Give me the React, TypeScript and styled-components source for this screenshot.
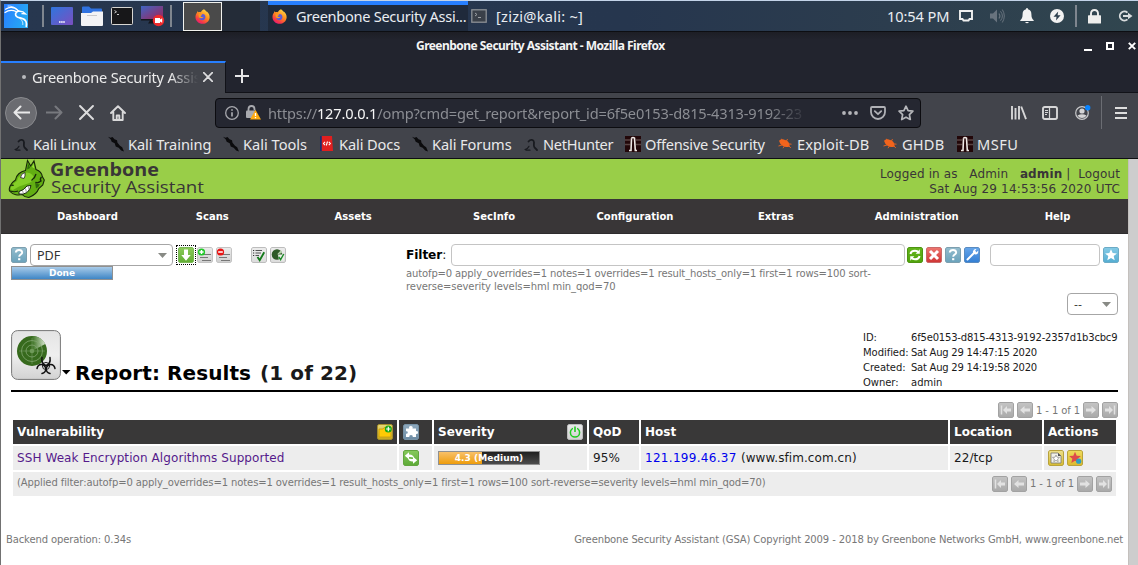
import React from 'react';
import styled, { createGlobalStyle } from 'styled-components';

const GlobalStyle = createGlobalStyle`
  * { box-sizing: border-box; }
  body { margin: 0; background: #fff; overflow: hidden; }
  svg { display: block; flex: none; }
`;

const Desktop = styled.div`
  width: 1138px;
  height: 565px;
  display: flex;
  flex-direction: column;
  border-top: 1px solid #c3d3e8;
  border-left: 1px solid #717171;
  font-family: 'Noto Sans', sans-serif;
  overflow: hidden;
  white-space: nowrap;
`;

/* ---------- desktop panel ---------- */
const Panel = styled.div`
  flex: none;
  height: 31px;
  display: flex;
  align-items: center;
  background: linear-gradient(90deg, #27374f 0%, #26364e 55%, #2c3d4e 78%, #31464f 100%);
  border-bottom: 1px solid #0d0e12;
  color: #e9edf2;
  font-size: 14.6px;
`;
const Slot = styled.div<{ $w: number }>`
  flex: none;
  width: ${p => p.$w}px;
  display: flex;
  align-items: center;
`;
const PanelLine = styled.div`
  width: 2px;
  height: 22px;
  background: #7f868f;
`;
const Launcher = styled.div`
  flex: none;
  width: 39px;
  height: 29px;
  background: #4a4a4a;
  border: 1px solid #f2f2ee;
  display: flex;
  align-items: center;
  justify-content: center;
`;
const DarkSlot = styled.div`
  flex: none;
  width: 38px;
  height: 30px;
  background: #242c38;
  margin-right: 8px;
`;
const Task = styled.div<{ $w: number; $active?: boolean; $gap: number }>`
  flex: none;
  width: ${p => p.$w}px;
  height: 30px;
  padding: 0 0 0 ${p => (p.$active ? 4 : 3)}px;
  display: flex;
  align-items: center;
  gap: ${p => p.$gap}px;
  background: ${p => (p.$active ? 'linear-gradient(#277fff 0 4px, #1f2a3b 4px)' : 'none')};
`;
const PanelText = styled.span<{ $ls?: number }>`
  letter-spacing: ${p => p.$ls ?? 0}px;
  margin-top: -1px;
`;
const Spring = styled.div`flex: 1;`;

/* ---------- browser chrome ---------- */
const TitleBar = styled.div`
  flex: none;
  height: 29px;
  padding: 3px 0 0;
  display: flex;
  align-items: flex-start;
  background: linear-gradient(#1d1e25, #22242e 8px);
  color: #f4f4f4;
`;
const WindowTitle = styled.div`
  padding: 1px 0 0 415px;
  width: 1083px;
  font-size: 12px;
  line-height: 20px;
  font-weight: 700;
  letter-spacing: -0.54px;
`;
const WindowButtons = styled.div`
  display: flex;
  gap: 14px;
  padding-top: 6px;
`;
const TabStrip = styled.div`
  flex: none;
  height: 32px;
  display: flex;
  background: linear-gradient(#22242e 31px, #111218 31px);
`;
const Tab = styled.div`
  width: 225px;
  height: 32px;
  padding: 0 12px 2px 20px;
  display: flex;
  align-items: center;
  background: #42444b;
  border-top: 2px solid #277fff;
  border-right: 1px solid #111218;
  color: #ececec;
  font-size: 14.6px;
`;
const NewTab = styled.div`
  padding: 8px 0 0 9px;
`;
const Dot = styled.i`
  width: 4px;
  height: 4px;
  margin: 0 6px 0 1px;
  border-radius: 50%;
  background: #b9babd;
`;
const TabLabel = styled.span`
  width: 166px;
  overflow: hidden;
  letter-spacing: -0.2px;
  mask-image: linear-gradient(90deg, #000 138px, transparent 166px);
`;
const NavBar = styled.div`
  flex: none;
  height: 39px;
  display: flex;
  align-items: center;
  background: #42444b;
  padding-left: 4px;
`;
const BackButton = styled.div`
  width: 32px;
  height: 32px;
  border-radius: 50%;
  border: 1px solid #898a8e;
  background: #6b6c71;
  display: flex;
  align-items: center;
  justify-content: center;
`;
const UrlBar = styled.div`
  width: 706px;
  height: 30px;
  border: 1px solid #0c0c10;
  border-radius: 4px;
  background: #252731;
  display: flex;
  align-items: center;
  padding-left: 9px;
`;
const Url = styled.div`
  width: 541px;
  margin-left: 7px;
  overflow: hidden;
  color: #8b8d93;
  font-size: 14.6px;
  letter-spacing: -0.17px;
  mask-image: linear-gradient(90deg, #000 500px, transparent 541px);
  b { font-weight: 400; color: #f6f6f6; }
`;
const NavDivider = styled.div`
  width: 1px;
  height: 33px;
  background: #6b6d73;
`;
const Bookmarks = styled.div`
  flex: none;
  height: 27px;
  padding: 0 0 3px 12px;
  display: flex;
  align-items: center;
  background: #42444b;
  border-bottom: 1px solid #0e0f12;
  color: #e9e9ea;
  font-size: 14.6px;
`;
const Bookmark = styled.div<{ $w: number; $ls: number }>`
  flex: none;
  width: ${p => p.$w}px;
  letter-spacing: ${p => p.$ls}px;
  display: flex;
  align-items: center;
  gap: 4px;
`;

/* ---------- web page ---------- */
const Viewport = styled.div`
  flex: 1;
  display: flex;
  min-height: 0;
  font-family: 'DejaVu Sans', sans-serif;
`;
const Page = styled.div`
  width: 1127px;
  display: flex;
  flex-direction: column;
  background: #fff;
  color: #1a1a1a;
`;
const ScrollTrack = styled.div`
  flex: 1;
  background: #cdcdcd;
  border-left: 1px solid #c4c0bd;
`;
const Brand = styled.div`
  flex: none;
  height: 40px;
  padding: 0 8px 0 6px;
  display: flex;
  justify-content: space-between;
  background: #99ce48;
  color: #393637;
`;
const BrandName = styled.div`
  display: flex;
  gap: 5px;
`;
const Account = styled.div`
  padding-top: 8px;
  font-size: 12px;
  line-height: 15px;
  letter-spacing: 0.11px;
  text-align: right;
  white-space: pre;
`;
const AccountDate = styled.div`letter-spacing: 0.18px;`;
const Menu = styled.div`
  flex: none;
  height: 35px;
  display: flex;
  align-items: center;
  background: #393637;
  border-bottom: 1px solid #2e2c2d;
  color: #fff;
  font-size: 10px;
  font-weight: 700;
`;
const MenuItem = styled.div`
  flex: none;
  width: 12.5%;
  text-align: center;
  &:first-child { padding-left: 32px; }
`;
const Toolbar = styled.div`
  flex: none;
  height: 83px;
  padding: 10px 10px 0;
  display: flex;
  justify-content: space-between;
`;
const ReportTools = styled.div`width: 395px;`;
const FilterTools = styled.div`
  width: 712px;
  display: flex;
  flex-direction: column;
`;
const Row = styled.div`
  display: flex;
  align-items: center;
  gap: 3px;
`;
const FilterBar = styled.div`
  width: 499px;
  margin-right: -1px;
  display: flex;
  align-items: center;
`;
const SelectLine = styled.div`
  display: flex;
  justify-content: flex-end;
`;
const Select = styled.div<{ $w: number; $small?: boolean }>`
  flex: none;
  width: ${p => p.$w}px;
  height: 22px;
  padding: 0 ${p => (p.$small ? 6 : 5)}px 0 6px;
  display: flex;
  align-items: center;
  justify-content: space-between;
  border: 1px solid #a6a6a6;
  border-radius: 4px;
  font-family: ${p => (p.$small ? "'DejaVu Sans'" : "'Noto Sans'")}, sans-serif;
  font-size: ${p => (p.$small ? 11 : 12.6)}px;
  color: #333;
`;
const Field = styled.div<{ $w: number }>`
  flex: none;
  width: ${p => p.$w}px;
  height: 22px;
  border: 1px solid #c4c4c4;
  border-radius: 4px;
`;
const Gap = styled.div<{ $w: number }>`
  flex: none;
  width: ${p => p.$w}px;
`;
const FocusRing = styled.div`
  flex: none;
  width: 18px;
  height: 18px;
  margin: 0 -1px 0 1px;
  outline: 1px dotted #000;
  display: flex;
  align-items: center;
  justify-content: center;
`;
const Progress = styled.div<{ $fill: string }>`
  width: 102px;
  height: 14px;
  border: 1px solid #909090;
  background: ${p => p.$fill};
  color: #fff;
  font-size: 9px;
  line-height: 12px;
  font-weight: 700;
  text-align: center;
`;
const FilterLabel = styled.div`
  width: 45px;
  font-size: 12.2px;
  b { color: #000; letter-spacing: -0.1px; }
`;
const FilterNote = styled.div`
  padding-top: 1px;
  width: 480px;
  color: #777;
  font-size: 10px;
  line-height: 13px;
  letter-spacing: -0.13px;
  white-space: pre;
  span { letter-spacing: -0.08px; }
`;
const ReportHead = styled.div`
  flex: none;
  height: 75px;
  margin: 0 10px;
  padding-top: 12px;
  display: flex;
  align-items: flex-start;
  border-bottom: 2px solid #000;
`;
const ReportBadge = styled.div`
  width: 50px;
  height: 50px;
  margin-top: 1px;
`;
const Caret = styled.div`
  width: 14px;
  padding: 41px 0 0 1px;
`;
const Heading = styled.h1`
  width: 788px;
  margin: 31px 0 0;
  font-size: 20px;
  line-height: 27px;
  letter-spacing: 0.08px;
  color: #000;
  span { color: #1a1a1a; margin-left: 9px; }
`;
const Facts = styled.dl`
  margin: 0;
  padding-top: 1px;
  display: grid;
  grid-template-columns: 48px 206px;
  grid-auto-rows: 15px;
  font-size: 10px;
  line-height: 15px;
  dd, dt { margin: 0; }
  dt { letter-spacing: -0.05px; }
  dd { letter-spacing: -0.24px; }
  dd:first-of-type { letter-spacing: -0.19px; }
  dd:last-of-type { letter-spacing: 0; }
`;
const Pager = styled.div`
  display: flex;
  align-items: center;
  justify-content: flex-end;
  gap: 3px;
  color: #777;
  font-size: 10px;
`;
const PagerText = styled.span`
  width: 44px;
  letter-spacing: -0.1px;
  margin-top: -1px;
`;
const TopPager = styled(Pager)`
  flex: none;
  height: 28px;
  padding: 8px 10px 0 0;
  ${PagerText} { margin-top: 0; }
`;
const Table = styled.div`
  flex: none;
  margin: 0 12px;
  width: 1103px;
  display: grid;
  grid-template-columns: 384px 33px 153px 50px 307px 92px 72px;
  grid-auto-rows: 24px;
  gap: 2px;
  font-size: 12px;
`;
const Cell = styled.div<{ $head?: boolean }>`
  display: flex;
  align-items: center;
  padding: 0 4px;
  gap: 3px;
  background: ${p => (p.$head ? '#393838' : '#ededed')};
  color: ${p => (p.$head ? '#fff' : '#1a1a1a')};
  font-weight: ${p => (p.$head ? 700 : 400)};
  letter-spacing: ${p => (p.$head ? 0.04 : 0.08)}px;
`;
const HeadLabel = styled.span`flex: 1;`;
const VulnLink = styled.span`color: #551a8b;`;
const HostLink = styled.span`
  color: #0000ee;
  letter-spacing: 0.3px;
  margin-right: 1.2px;
`;
const FootCell = styled.div`
  grid-column: 1 / -1;
  padding: 0 4px;
  display: flex;
  align-items: center;
  justify-content: space-between;
  background: #ededed;
  color: #777;
  font-size: 10px;
`;
const AppliedFilter = styled.span`
  margin-top: -3px;
  letter-spacing: -0.106px;
`;
const Footer = styled.div`
  margin-top: auto;
  padding: 0 5px 18px;
  display: flex;
  justify-content: space-between;
  color: #777;
  font-size: 10px;
  line-height: 14px;
  letter-spacing: -0.125px;
`;

/* ---------- drawings ---------- */
const Firefox = () => (
  <svg width="15" height="15" viewBox="0 0 16 16">
    <defs>
      <linearGradient id="ffx" x1="0.8" y1="0" x2="0.2" y2="1">
        <stop offset="0" stopColor="#ffe14a" /><stop offset="0.45" stopColor="#ff8a1e" />
        <stop offset="0.8" stopColor="#f5354a" /><stop offset="1" stopColor="#e31587" />
      </linearGradient>
    </defs>
    <path d="M9.5 0.3c1.9 1 2.4 2.2 2.8 3.2 0-.5 0-1-.2-1.4C14.500 4 15.800 6.300 15.600 9c-.3 4-3.500 6.800-7.500 6.800C3.800 15.800.5 12.600.5 8.500c0-2 .7-3.500 1.600-4.500l.3-1.700 1.300 1.200c.8-.3 1.600-.3 2.300 0C7.300 1.700 8.300.800 9.500.3z" fill="url(#ffx)" />
    <circle cx="7.800" cy="8.600" r="3.300" fill="#5b5bd8" />
    <path d="M3.800 5.200l4 .3c-.2 1.200-1.500 1.300-1.900 2.200.3.900 1.900 1.200 3.200.6-.9 2-3.700 2-5 .4z" fill="#ff9b1c" />
  </svg>
);
const KaliLogo = () => (
  <svg width="24" height="24" viewBox="0 0 24 24">
    <defs><linearGradient id="kali" x1="0" x2="1" y2="0.4"><stop stopColor="#2a7dff" /><stop offset="1" stopColor="#25a8f5" /></linearGradient></defs>
    <rect width="24" height="24" fill="url(#kali)" />
    <g fill="none" stroke="#fff" strokeLinecap="round">
      <path d="M1.500 5.200C6 2.500 11 3.500 14.500 7M1 8.500c3.500-2.600 8-2.500 11.500-.8" strokeWidth="1.200" />
      <path d="M4 2c4.500 0 8 1.500 10.500 5" strokeWidth=".8" />
      <path d="M14.500 7c-3.500 1.200-4 4.500-1.200 6 3 1.300 7 .8 8.700 4.500.6 1.500.6 3 .3 4.800" strokeWidth="1.700" />
      <path d="M14.500 7l4.500.8 2.500 2.200-3.500-.3" strokeWidth="1.300" />
      <path d="M15.500 14c3 2.500 3.500 4.500 3.300 6.500" strokeWidth=".8" />
    </g>
  </svg>
);
const Gradients = () => (
  <defs>
    <linearGradient id="scr" x2="1" y2="1"><stop stopColor="#2f76dd" /><stop offset="1" stopColor="#7b4fc0" /></linearGradient>
    <linearGradient id="scr2" x2="1" y2="1"><stop stopColor="#3f65c4" /><stop offset="1" stopColor="#a02358" /></linearGradient>
  </defs>
);
const DesktopIcon = () => (
  <svg width="22" height="18"><Gradients /><rect width="22" height="18" rx="1" fill="url(#scr)" /><path d="M8 15h6" stroke="#fff" strokeWidth="1.700" strokeDasharray="1.600 .5" /></svg>
);
const FolderIcon = () => (
  <svg width="22" height="20"><path d="M1 7V1.500Q1 .5 2 .5h6l2 2h10q1 0 1 1V8z" fill="#2f72e0" /><path d="M0 7h10l2-1.500h10V19q0 1-1 1H1q-1 0-1-1z" fill="#f3f3f5" /><path d="M6 9.500h10" stroke="#c9c9cc" /></svg>
);
const TerminalIcon = () => (
  <svg width="22" height="18"><rect x=".5" y=".5" width="21" height="17" rx="1" fill="#171719" stroke="#d8d6d2" /><path d="M3.500 3.500l2 1.300-2 1.200M6 7.500h2" stroke="#ddd" fill="none" strokeWidth=".9" /></svg>
);
const RecorderIcon = () => (
  <svg width="24" height="22"><path d="M0 1h22v13H0z" fill="url(#scr2)" /><path d="M0 14h22v1.500H0zM9 15.500h5v3H7z" fill="#15161c" /><circle cx="17.500" cy="15.500" r="5.700" fill="#ee2a2c" /><path d="M14 13h5v1.500l2.200-1.200v4.500L19 16.500V18h-5z" fill="#fff" /></svg>
);
const SmallTerminal = () => (
  <svg width="16" height="14"><rect x=".8" y=".8" width="14.400" height="12.400" fill="#3a4049" stroke="#8c9096" strokeWidth="1.300" /><path d="M4 4l2 1.500L4 7M7 8.500h3" stroke="#9da1a6" fill="none" /></svg>
);
const DisplayGlyph = () => (
  <svg width="14" height="12"><path d="M1 1h12v8h-2.500l-1 1.500h-5L3.500 9H1z" fill="none" stroke="#f0f0f0" strokeWidth="1.900" /></svg>
);
const VolumeGlyph = () => (
  <svg width="16" height="14" fill="none" stroke="#68737e"><path d="M0 4.500h3L7 .5v13L3 9.500H0z" fill="#68737e" stroke="none" /><path d="M9 4.500q1.800 2.500 0 5" strokeWidth="1.200" /><path d="M10.500 2.300q3.800 4.700 0 9.400M12.300.5q4 6.500 0 13" /></svg>
);
const BellGlyph = () => (
  <svg width="14" height="16" fill="#f2f2f2"><path d="M7 0q1 0 1 1.200c2.500.6 3.400 2.300 3.400 5 0 3.300.8 4.600 2.300 6.100V13H.3v-.7c1.500-1.500 2.300-2.800 2.300-6.100 0-2.700.9-4.400 3.400-5Q6 0 7 0zM5 14h4q-2 2.500-4 0z" /></svg>
);
const PowerGlyph = () => (
  <svg width="14" height="14"><circle cx="7" cy="7" r="7" fill="#f2f2f2" /><path d="M8.200 2.500L3.500 7.800h3L6 11.500l4.600-5.200h-3z" fill="#2d3f4e" /></svg>
);
const LockGlyph = () => (
  <svg width="13" height="15"><path d="M3 7V4.500Q3 1 6.500 1T10 4.500V7" stroke="#eeeeec" strokeWidth="1.900" fill="none" /><rect y="6.300" width="13" height="8.300" rx=".6" fill="#eeeeec" /></svg>
);
const LogoutGlyph = () => (
  <svg width="15" height="12" fill="none" stroke="#d8dcdd" strokeWidth="1.900"><path d="M9.500 2.600A4.600 4.600 0 1 0 9.500 9.400M5 6h6" /><path d="M10 2.800l4.500 3.200L10 9.200z" fill="#d8dcdd" stroke="none" /></svg>
);
const MinGlyph = () => <svg width="8" height="10"><path d="M0 9h8" stroke="#fff" strokeWidth="2" /></svg>;
const MaxGlyph = () => <svg width="8" height="10"><path d="M1 2h6v6H1z" stroke="#fff" strokeWidth="2" fill="none" /></svg>;
const CloseGlyph = () => <svg width="8" height="10"><path d="M.8 1.800l6.400 6.400M7.200 1.800L.8 8.200" stroke="#fff" strokeWidth="1.900" /></svg>;
const CrossGlyph = ({ s = 10, w = 1.7 }: { s?: number; w?: number }) => (
  <svg width={s} height={s} viewBox="0 0 10 10"><path d="M.7.7l8.600 8.600M9.300.7L.7 9.300" stroke="#dcdcdd" strokeWidth={w} strokeLinecap="round" /></svg>
);
const PlusGlyph = () => <svg width="14" height="14"><path d="M7 0v14M0 7h14" stroke="#e6e6e7" strokeWidth="2" /></svg>;
const Arrow = ({ flip, color }: { flip?: boolean; color: string }) => (
  <svg width="17" height="15" viewBox="0 0 17 15"><path d={flip ? 'M0.500 7.500h15M9.500 1.500l6 6-6 6' : 'M16.500 7.500H1.500M7.500 1.500l-6 6 6 6'} stroke={color} strokeWidth="2" fill="none" strokeLinecap="round" strokeLinejoin="round" /></svg>
);
const HomeGlyph = () => (
  <svg width="16" height="16" fill="none" stroke="#d9d9da" strokeWidth="1.900" strokeLinecap="round" strokeLinejoin="round"><path d="M1 8l7-6.800L15 8M3.300 7v8h9.400V7M6.700 14.500v-4h2.600v4" /></svg>
);
const InfoGlyph = () => (
  <svg width="14" height="14" fill="none" stroke="#a7a8ad"><circle cx="7" cy="7" r="6.300" strokeWidth="1.300" /><path d="M7 6.200v4.300M7 3.300v1.500" strokeWidth="1.700" /></svg>
);
const InsecureGlyph = () => (
  <svg width="15" height="15"><path d="M2.500 6V4Q2.500 1 5.500 1T8.500 4v1.500" stroke="#a9aaaf" strokeWidth="1.800" fill="none" /><rect y="5.500" width="9" height="7.500" rx="1" fill="#a9aaaf" /><path d="M9.500 4.800L15 14.600H4z" fill="#ffab0f" /><path d="M9.500 8v3M9.500 12v1.300" stroke="#fff" strokeWidth="1.300" /></svg>
);
const DotsGlyph = () => <svg width="16" height="4" fill="#b4b5b9"><circle cx="2" cy="2" r="1.900" /><circle cx="8" cy="2" r="1.900" /><circle cx="14" cy="2" r="1.900" /></svg>;
const PocketGlyph = () => (
  <svg width="16" height="14" fill="none" stroke="#b0b1b6" strokeWidth="1.800" strokeLinejoin="round" strokeLinecap="round"><path d="M2 1h12q1 0 1 1v4a7 7 0 0 1-14 0V2q0-1 1-1zM4.800 5.200L8 8.200l3.200-3" /></svg>
);
const StarGlyph = () => (
  <svg width="16" height="16" fill="none" stroke="#b6b7bb" strokeWidth="1.700" strokeLinejoin="round"><path d="M8 1.200l2.100 4.400 4.800.6-3.500 3.400.9 4.900L8 12.200l-4.300 2.300.9-4.900L1.100 6.200l4.800-.6z" /></svg>
);
const LibraryGlyph = () => (
  <svg width="16" height="14" stroke="#d6d6d7" strokeWidth="1.900"><path d="M1 0v13.500M4.500 2v11.500M8 0v13.500M10.200.5L15 13.200" /></svg>
);
const SidebarGlyph = () => (
  <svg width="16" height="14" fill="none" stroke="#d6d6d7"><rect x="1" y="1" width="14" height="12" rx="1.700" strokeWidth="1.900" /><path d="M7.500 1v12" strokeWidth="1.200" /><path d="M3 4.500h3M3 6.500h3M3 8.500h2" strokeWidth="1" /></svg>
);
const ProfileGlyph = () => (
  <svg width="16" height="15"><circle cx="7" cy="8" r="6.300" fill="none" stroke="#c8c9cb" strokeWidth="1.200" /><circle cx="7" cy="6" r="2.600" fill="#d4d4d5" /><path d="M2.500 10.500Q7 8 11.500 10.500 10 13 7 13t-4.500-2.500z" fill="#d4d4d5" /><circle cx="12.700" cy="2.700" r="2.700" fill="#0a84ff" /></svg>
);
const MenuGlyph = () => <svg width="12" height="12"><path d="M0 1h12M0 6h12M0 11h12" stroke="#dedede" strokeWidth="1.900" /></svg>;

type Mark = 'dragon' | 'blade' | 'docs' | 'offsec' | 'bug';
const BookmarkIcon = ({ kind }: { kind: Mark }) => (
  <svg width="16" height="16">
    {kind === 'dragon' && <g fill="none" stroke="#191b20" strokeLinecap="round"><path d="M5.500 5.500C7.500 3 10.800 3.500 11 6.200c.1 1.800-.8 3.500.5 5.300l2.500 2.500" strokeWidth="1.800" /><path d="M2 13.500c2-.3 3.200-1.500 4-3.200M3 14.200h4" strokeWidth="1.200" /></g>}
    {kind === 'blade' && <path d="M0 .8l2.500 1L4.500 1l2 2.200 2.500 1 .5 2.500 2.500 3 2.200 1.500L16 15.500l-2.800-1-2.500-2.700-3-1.300-1-3.300-3-1.500L2.800 3.500z" fill="#0b0b0d" />}
    {kind === 'docs' && <g><path d="M1 0h12l1 15H2z" fill="#e01f1f" /><path d="M1 0h1.800v15H1z" fill="#1c2f6c" /><path d="M6 5.800L4.500 7.500 6 9.200M9.800 5.800l1.500 1.700-1.500 1.700M8.500 5.500L7.300 9.500" stroke="#fff" strokeWidth="1.100" fill="none" /></g>}
    {kind === 'offsec' && <g><rect width="16" height="16" fill="#220709" /><path d="M0 4h5M0 8.500h5M11 4h5M11 8.500h5" stroke="#5a4443" strokeWidth="1.500" /><path d="M6.500 2.200Q8 .8 9.500 2.200L10.300 14.500H12M6.500 2.200l-.5 12.300H4" stroke="#efe9e6" strokeWidth="1.600" fill="none" /></g>}
    {kind === 'bug' && <g><path d="M2 4.800q3-2.500 6-.8 4.500.8 4.700 6.500-4.500 1.500-7.200-.8Q2.800 8 2 4.800z" fill="#f2641c" /><path d="M5 4.500L4.500 2.800M8.500 4.800l2.500-1.300M11 7.800l3.500.4M5 9l-3.500 1M7 10.500l-1 1.700M12 10l1.800 2" stroke="#f2641c" strokeWidth=".9" /></g>}
  </svg>
);

/* The product mascot: a dragon head in profile, facing left. */
const GreenboneDragon = () => (
  <svg width="38" height="40" viewBox="0 0 38 40">
    <path d="M18.500 11.500L20.500 1.500l3.200 5.500L27 1.800l2 8.700c4 1.500 6 4 6.300 7l2 3.500-1.500 5-4 3.500c-1.500 4-4.500 7-10 9-3.500-.3-5.500-1.500-6.800-3-3.500 1-9 .5-12-3C1 30 3.500 24 8.500 21c.5-5 5-8.500 10-9.500z" fill="#62ae12" stroke="#17270a" strokeWidth="1.100" />
    <path d="M20 10.500l1.200-6 2 4.500z" fill="#2f6b0c" />
    <path d="M25 8l1.500-3.500 1 5z" fill="#9be23c" />
    <path d="M11 19q4-5 9-5.500 7 1 7 7-4 4-9 5-6 1-12 5.500-3 0-2-3 2-4 6-6z" fill="#84cf27" />
    <path d="M29 15q-1 4-4.500 6.500M34.500 18q-2 2-.5 4-4 3-5.500 1" fill="none" stroke="#17270a" strokeWidth="1.300" />
    <path d="M28 23q2 3 5 2-1 3-4 4.500z" fill="#2f6b0c" />
    <path d="M13.500 18.500q.5-4 4.500-5 .5 4-1 6z" fill="#fff" stroke="#222" strokeWidth=".8" />
    <path d="M12 32.500q4.500-1 8-5.500l4-.5q-.5 4-4 7-4 2.500-8 1.500z" fill="#fff" stroke="#17270a" strokeWidth="1" />
    <path d="M15.500 31.500l1 3.500M18.500 29.500l1 4M21.500 27.500l.5 3.500" stroke="#777" strokeWidth=".7" />
    <path d="M4.500 27q1-1.300 2.200-.5M3 32q4.500 1.500 8 0" stroke="#17270a" fill="none" strokeWidth="1.200" />
  </svg>
);
const Wordmark = () => (
  <svg width="160" height="40" fontFamily="'Open Sans', sans-serif" fill="#393637">
    <text x="0" y="16.500" fontSize="18.500" fontWeight="700" textLength="109" lengthAdjust="spacingAndGlyphs">Greenbone</text>
    <text x="1" y="34" fontSize="17" textLength="153" lengthAdjust="spacingAndGlyphs">Security Assistant</text>
  </svg>
);

type IconName = 'help' | 'download' | 'add' | 'remove' | 'results' | 'assets' | 'refresh' | 'delete' | 'edit' | 'favorite'
  | 'folder' | 'puzzle' | 'solution' | 'power' | 'note' | 'override' | 'first' | 'prev' | 'next' | 'last';
const tones: Record<IconName, [string, string, string]> = {
  help: ['#94bccd', '#6aa2bb', '#7d9faf'], download: ['#8bcb5a', '#62ad34', '#7db85a'],
  add: ['#ececec', '#cfcfcf', '#c4c4c4'], remove: ['#ececec', '#cfcfcf', '#c4c4c4'],
  results: ['#ececec', '#dcdcdc', '#bdbdbd'], assets: ['#ececec', '#dcdcdc', '#bdbdbd'],
  refresh: ['#63b51c', '#51a30c', '#4d9411'], delete: ['#ee7770', '#cf3434', '#c96a6a'],
  edit: ['#67a6ea', '#327ed3', '#5a8bc0'], favorite: ['#86cbe6', '#54add2', '#6cabc6'],
  folder: ['#e8d878', '#c9a91c', '#a58e2a'], puzzle: ['#8fa9bd', '#6c8ba3', '#7691a5'],
  solution: ['#86c95c', '#5daa37', '#62a53f'], power: ['#e8e8e8', '#d2d2d2', '#bbb'],
  note: ['#eee08a', '#d6bb32', '#b8a23b'], override: ['#eedb5c', '#dcb92d', '#b8a23b'],
  first: ['#c4c4c4', '#a9a9a9', '#a2a2a2'], prev: ['#c4c4c4', '#a9a9a9', '#a2a2a2'],
  next: ['#c4c4c4', '#a9a9a9', '#a2a2a2'], last: ['#c4c4c4', '#a9a9a9', '#a2a2a2'],
};
const Glyph = styled.svg`border-radius: 2px;`;
const Icon = ({ name }: { name: IconName }) => {
  const [a, b, edge] = tones[name];
  return (
    <Glyph width="16" height="16" viewBox="0 0 16 16">
      <defs><linearGradient id={`t-${name}`} x2="0" y2="1"><stop stopColor={a} /><stop offset="1" stopColor={b} /></linearGradient></defs>
      <rect x=".5" y=".5" width="15" height="15" rx="1.500" fill={`url(#t-${name})`} stroke={edge} />
      {name === 'help' && <><path d="M4.800 5.500Q5 3 8 3t3.200 2.500c0 2-3 2-3 4.300" stroke="#fff" strokeWidth="1.900" fill="none" /><rect x="7.100" y="11.200" width="2.200" height="2" fill="#fff" /></>}
      {name === 'download' && <path d="M6 2.500h4V8h2.700L8 13.800 3.300 8H6z" fill="#fff" />}
      {(name === 'add' || name === 'remove') && <><path d="M7 7.500h7M3 10.500h8M5 13.500h9" stroke="#777" strokeWidth="1.200" />
        {name === 'add' ? <><circle cx="4.500" cy="5" r="3.600" fill="#20c828" /><path d="M4.500 2.900v4.200M2.400 5h4.200" stroke="#fff" strokeWidth="1.500" /></> : <><circle cx="4.500" cy="5" r="3.600" fill="#e81414" /><path d="M2.200 5h4.600" stroke="#fff" strokeWidth="1.600" /></>}</>}
      {name === 'results' && <><path d="M4.500 3.500H11M4.500 6H10M4.500 8.500H8" stroke="#555" strokeWidth="1.100" /><path d="M2 3.500h1.200M2 6h1.200M2 8.500h1.200" stroke="#333" /><path d="M6.500 10l2.200 3.300 4.500-8" stroke="#147a1b" strokeWidth="1.900" fill="none" /></>}
      {name === 'assets' && <><circle cx="7" cy="7.500" r="5.300" fill="#2e5a27" /><path d="M7 7.500L11 3l1 3z" fill="#b9d3ae" /><path d="M8 7.500h6v6H9z" fill="#e9efe7" /><path d="M8.800 10l1.800 2.700 3.200-5.700" stroke="#1e8a2a" strokeWidth="1.400" fill="none" /></>}
      {name === 'refresh' && <g fill="none" stroke="#fff" strokeWidth="2"><path d="M3.500 7Q4 3.700 8 3.700q2.500 0 3.500 1.500M12.500 9Q12 12.300 8 12.300q-2.500 0-3.500-1.500" /><path d="M12.800 2.300V6.800H8.600zM3.200 13.700V9.200h4.200z" fill="#fff" stroke="none" /></g>}
      {name === 'delete' && <path d="M4 4l8 8M12 4l-8 8" stroke="#fff" strokeWidth="3" />}
      {name === 'edit' && <><path d="M3.500 12.500L11 5" stroke="#fff" strokeWidth="2" strokeLinecap="round" /><path d="M12.500 2L10.800 4.200l1.200 1.200 2.200-1.700q.4 3.500-2.700 3.900-3.200-.6-2.500-3.300Q9.800 1.600 12.500 2zM2 11.500l2.500 2.500" fill="#fff" /></>}
      {name === 'favorite' && <path d="M8 2.200l1.700 3.900 4.200.3-3.200 2.700 1 4.200L8 11.100l-3.700 2.200 1-4.200L2.100 6.400l4.200-.3z" fill="#fff" />}
      {name === 'folder' && <><path d="M2 5h4l1.200-1.500H14V13H2z" fill="#ffcb05" stroke="#c79a10" strokeWidth=".8" /><circle cx="11.300" cy="5" r="3.500" fill="#18a818" /><path d="M11.300 2.800v4.400M9.100 5h4.400" stroke="#fff" strokeWidth="1.200" /></>}
      {name === 'puzzle' && <path d="M3 4.500h3.300Q5.300 2 7.800 2t1.700 2.500H13V7.200q2-.8 2 1.300t-2 1.200V13H9.800q.3-2-1.800-2t-1.700 2H3V9.800q1.800.2 1.800-1.300T3 7.300z" fill="#fff" />}
      {name === 'solution' && <g fill="#fff"><path d="M1.800 5.800L6 2.300v2.200q4-.3 5.200 3.500Q9 6.600 6 7v2.300z" /><path d="M14.200 10.200L10 13.700v-2.200q-4 .3-5.200-3.500Q7 9.400 10 9V6.700z" /></g>}
      {name === 'power' && <><circle cx="8" cy="8.500" r="4.600" fill="none" stroke="#23cc23" strokeWidth="1.500" /><path d="M8 2.500v5.500" stroke="#e4e4e4" strokeWidth="4" /><path d="M8 2.500v5.500" stroke="#23cc23" strokeWidth="1.600" /></>}
      {name === 'note' && <><path d="M3 3h7l3 3v7H3z" fill="#f1f1e8" stroke="#777" strokeWidth=".8" /><path d="M10 3v3h3" fill="#555" /><path d="M8 5l1 2.200 2.500.2-1.900 1.600.6 2.600L8 10.300l-2.200 1.300.6-2.600-1.900-1.600 2.500-.2z" fill="#fff" stroke="#888" strokeWidth=".7" /></>}
      {name === 'override' && <><path d="M8 1.800l1.700 3.900 4.200.3-3.200 2.700 1 4.200L8 10.700l-3.700 2.200 1-4.200L2.100 6l4.200-.3z" fill="#dd4b4b" /><circle cx="11.700" cy="11.200" r="2.600" fill="#2b9fc4" /></>}
      {name === 'prev' && <path d="M3 8l4.500-4v2.500H13v3H7.500V12z" fill="#e2e2e2" />}
      {name === 'first' && <path d="M5 8l4-4v2.500h4v3H9V12z" fill="#e2e2e2" />}
      {name === 'next' && <path d="M13 8L8.500 4v2.500H3v3h5.500V12z" fill="#e2e2e2" />}
      {name === 'last' && <path d="M11 8L7 4v2.500H3v3h4V12z" fill="#e2e2e2" />}
      {name === 'first' && <path d="M3.500 3.500v9" stroke="#e2e2e2" strokeWidth="1.500" />}
      {name === 'last' && <path d="M12.500 3.500v9" stroke="#e2e2e2" strokeWidth="1.500" />}
    </Glyph>
  );
};
const Triangle = () => <svg width="9" height="5"><path d="M0 0h9L4.500 5z" fill="#888a85" /></svg>;

const ReportArt = () => (
  <svg width="50" height="50">
    <defs><linearGradient id="tile" x2="0" y2="1"><stop stopColor="#e4e4e4" /><stop offset=".5" stopColor="#efefef" /><stop offset="1" stopColor="#d2d2d2" /></linearGradient>
      <linearGradient id="beam" x1="0" x2="1"><stop stopColor="#39701f" /><stop offset="1" stopColor="#d5e4cc" /></linearGradient></defs>
    <rect x=".6" y=".6" width="48.800" height="48.800" rx="6" fill="url(#tile)" stroke="#777" />
    <circle cx="21" cy="21" r="15" fill="#376a1d" />
    <path d="M21 21V6a15 15 0 0 1 13.200 8z" fill="url(#beam)" />
    <g fill="none" stroke="#83a771" strokeWidth=".8"><circle cx="21" cy="21" r="10.500" /><circle cx="21" cy="21" r="6" /><path d="M21 8v26M8 21h26" strokeWidth=".5" /></g>
    <circle cx="21" cy="21" r="2.300" fill="#6f9a59" />
    <g fill="none" stroke="#111" strokeLinecap="round">
      <path d="M31 27.500q-1 6.500 4 8 5-1.500 4-8" strokeWidth="1.500" />
      <path d="M26 38.500q1-4.500 5-4 3.500 1 3.800 4.500 0 3.500-3.800 4.500M44 38.500q-1-4.500-5-4-3.500 1-3.800 4.500 0 3.500 3.800 4.500" strokeWidth="1.500" />
      <circle cx="35" cy="36" r="3.600" strokeWidth=".9" />
    </g>
  </svg>
);

const PagerIcons = () => (
  <>
    <Icon name="first" /><Icon name="prev" /><PagerText>1 - 1 of 1</PagerText><Icon name="next" /><Icon name="last" />
  </>
);

const bookmarks: [Mark, string, number, number][] = [
  ['dragon', 'Kali Linux', 95, -0.28], ['blade', 'Kali Training', 115, -0.08], ['blade', 'Kali Tools', 96, 0], ['docs', 'Kali Docs', 93, -0.1],
  ['blade', 'Kali Forums', 111, -0.1], ['dragon', 'NetHunter', 102, -0.3], ['offsec', 'Offensive Security', 152, -0.22],
  ['bug', 'Exploit-DB', 105, 0.1], ['bug', 'GHDB', 75, 0.2], ['offsec', 'MSFU', 80, 0.45],
];
const menu = ['Dashboard', 'Scans', 'Assets', 'SecInfo', 'Configuration', 'Extras', 'Administration', 'Help'];

export default function App() {
  return (
    <Desktop>
      <GlobalStyle />
      <Panel>
        <Gap $w={3} />
        <Slot $w={38}><KaliLogo /></Slot>
        <Slot $w={9}><PanelLine /></Slot>
        <Slot $w={30}><DesktopIcon /></Slot>
        <Slot $w={30}><FolderIcon /></Slot>
        <Slot $w={30}><TerminalIcon /></Slot>
        <Slot $w={29}><RecorderIcon /></Slot>
        <Slot $w={13}><PanelLine /></Slot>
        <Launcher><Firefox /></Launcher>
        <DarkSlot />
        <Task $w={200} $gap={9} $active><Firefox /><PanelText $ls={-0.3}>Greenbone Security Assi...</PanelText></Task>
        <Task $w={180} $gap={9}><SmallTerminal /><PanelText $ls={0.25}>[zizi@kali: ~]</PanelText></Task>
        <Spring />
        <Slot $w={72}><PanelText $ls={-0.1}>10:54 PM</PanelText></Slot>
        <Slot $w={31}><DisplayGlyph /></Slot>
        <Slot $w={30}><VolumeGlyph /></Slot>
        <Slot $w={30}><BellGlyph /></Slot>
        <Slot $w={25}><PowerGlyph /></Slot>
        <Slot $w={13}><PanelLine /></Slot>
        <Slot $w={30}><LockGlyph /></Slot>
        <Slot $w={20}><LogoutGlyph /></Slot>
      </Panel>
      <TitleBar>
        <WindowTitle>Greenbone Security Assistant - Mozilla Firefox</WindowTitle>
        <WindowButtons><MinGlyph /><MaxGlyph /><CloseGlyph /></WindowButtons>
      </TitleBar>
      <TabStrip>
        <Tab><Dot /><TabLabel>Greenbone Security Assistant</TabLabel><Gap $w={5} /><CrossGlyph /></Tab>
        <NewTab><PlusGlyph /></NewTab>
      </TabStrip>
      <NavBar>
        <BackButton><Arrow color="#e9e9ea" /></BackButton>
        <Gap $w={9} />
        <Arrow flip color="#77797e" />
        <Gap $w={16} />
        <CrossGlyph s={15} w={1.3} />
        <Gap $w={16} />
        <HomeGlyph />
        <Gap $w={89} />
        <UrlBar>
          <InfoGlyph /><Gap $w={7} /><InsecureGlyph />
          <Url>https://<b>127.0.0.1</b>/omp?cmd=get_report&amp;report_id=6f5e0153-d815-4313-9192-23</Url>
          <Gap $w={33} /><DotsGlyph /><Gap $w={12} /><PocketGlyph /><Gap $w={12} /><StarGlyph />
        </UrlBar>
        <Gap $w={90} />
        <LibraryGlyph /><Gap $w={15} /><SidebarGlyph /><Gap $w={17} /><ProfileGlyph />
        <Gap $w={10} /><NavDivider /><Gap $w={13} /><MenuGlyph />
      </NavBar>
      <Bookmarks>
        {bookmarks.map(([kind, label, w, ls]) => (
          <Bookmark key={label} $w={w} $ls={ls}><BookmarkIcon kind={kind} />{label}</Bookmark>
        ))}
      </Bookmarks>
      <Viewport>
        <Page>
          <Brand>
            <BrandName><GreenboneDragon /><Wordmark /></BrandName>
            <Account>
              <div>Logged in as{'   '}Admin{'   '}<b>admin</b> |{'  '}Logout</div>
              <AccountDate>Sat Aug 29 14:53:56 2020 UTC</AccountDate>
            </Account>
          </Brand>
          <Menu>{menu.map(m => <MenuItem key={m}>{m}</MenuItem>)}</Menu>
          <Toolbar>
            <ReportTools>
              <Row>
                <Icon name="help" /><Select $w={143}>PDF<Triangle /></Select>
                <FocusRing><Icon name="download" /></FocusRing>
                <Icon name="add" /><Icon name="remove" /><Gap $w={13} /><Icon name="results" /><Icon name="assets" />
              </Row>
              <Progress $fill="linear-gradient(#a8cbe9, #3f86c6)">Done</Progress>
            </ReportTools>
            <FilterTools>
              <Row>
                <FilterBar>
                  <FilterLabel><b>Filter</b>:</FilterLabel><Field $w={454} />
                </FilterBar>
                <Icon name="refresh" /><Icon name="delete" /><Icon name="help" /><Icon name="edit" />
                <Gap $w={4} /><Field $w={110} />
                <Icon name="favorite" />
              </Row>
              <FilterNote>{'autofp=0 apply_overrides=1 notes=1 overrides=1 result_hosts_only=1 first=1 rows=100 sort-\n'}<span>reverse=severity levels=hml min_qod=70</span></FilterNote>
              <SelectLine><Select $w={51} $small>--<Triangle /></Select></SelectLine>
            </FilterTools>
          </Toolbar>
          <ReportHead>
            <ReportBadge><ReportArt /></ReportBadge>
            <Caret><svg width="9" height="5"><path d="M0 0h8.500L4.200 4.500z" /></svg></Caret>
            <Heading>Report: Results<span>(1 of 22)</span></Heading>
            <Facts>
              <dt>ID:</dt><dd>6f5e0153-d815-4313-9192-2357d1b3cbc9</dd>
              <dt>Modified:</dt><dd>Sat Aug 29 14:47:15 2020</dd>
              <dt>Created:</dt><dd>Sat Aug 29 14:19:58 2020</dd>
              <dt>Owner:</dt><dd>admin</dd>
            </Facts>
          </ReportHead>
          <TopPager><PagerIcons /></TopPager>
          <Table>
            <Cell $head><HeadLabel>Vulnerability</HeadLabel><Icon name="folder" /></Cell>
            <Cell $head><Icon name="puzzle" /></Cell>
            <Cell $head><HeadLabel>Severity</HeadLabel><Icon name="power" /></Cell>
            <Cell $head>QoD</Cell>
            <Cell $head>Host</Cell>
            <Cell $head>Location</Cell>
            <Cell $head>Actions</Cell>
            <Cell><VulnLink>SSH Weak Encryption Algorithms Supported</VulnLink></Cell>
            <Cell><Icon name="solution" /></Cell>
            <Cell><Progress $fill="linear-gradient(#f8c069, #ee9d0c) 0 0 / 43% 100% no-repeat, linear-gradient(#202020, #4c4c4c)">4.3 (Medium)</Progress></Cell>
            <Cell>95%</Cell>
            <Cell><HostLink>121.199.46.37</HostLink>(www.sfim.com.cn)</Cell>
            <Cell>22/tcp</Cell>
            <Cell><Icon name="note" /><Icon name="override" /></Cell>
            <FootCell>
              <AppliedFilter>(Applied filter:autofp=0 apply_overrides=1 notes=1 overrides=1 result_hosts_only=1 first=1 rows=100 sort-reverse=severity levels=hml min_qod=70)</AppliedFilter>
              <Pager><PagerIcons /></Pager>
            </FootCell>
          </Table>
          <Footer>
            <span>Backend operation: 0.34s</span>
            <span>Greenbone Security Assistant (GSA) Copyright 2009 - 2018 by Greenbone Networks GmbH, www.greenbone.net</span>
          </Footer>
        </Page>
        <ScrollTrack />
      </Viewport>
    </Desktop>
  );
}
